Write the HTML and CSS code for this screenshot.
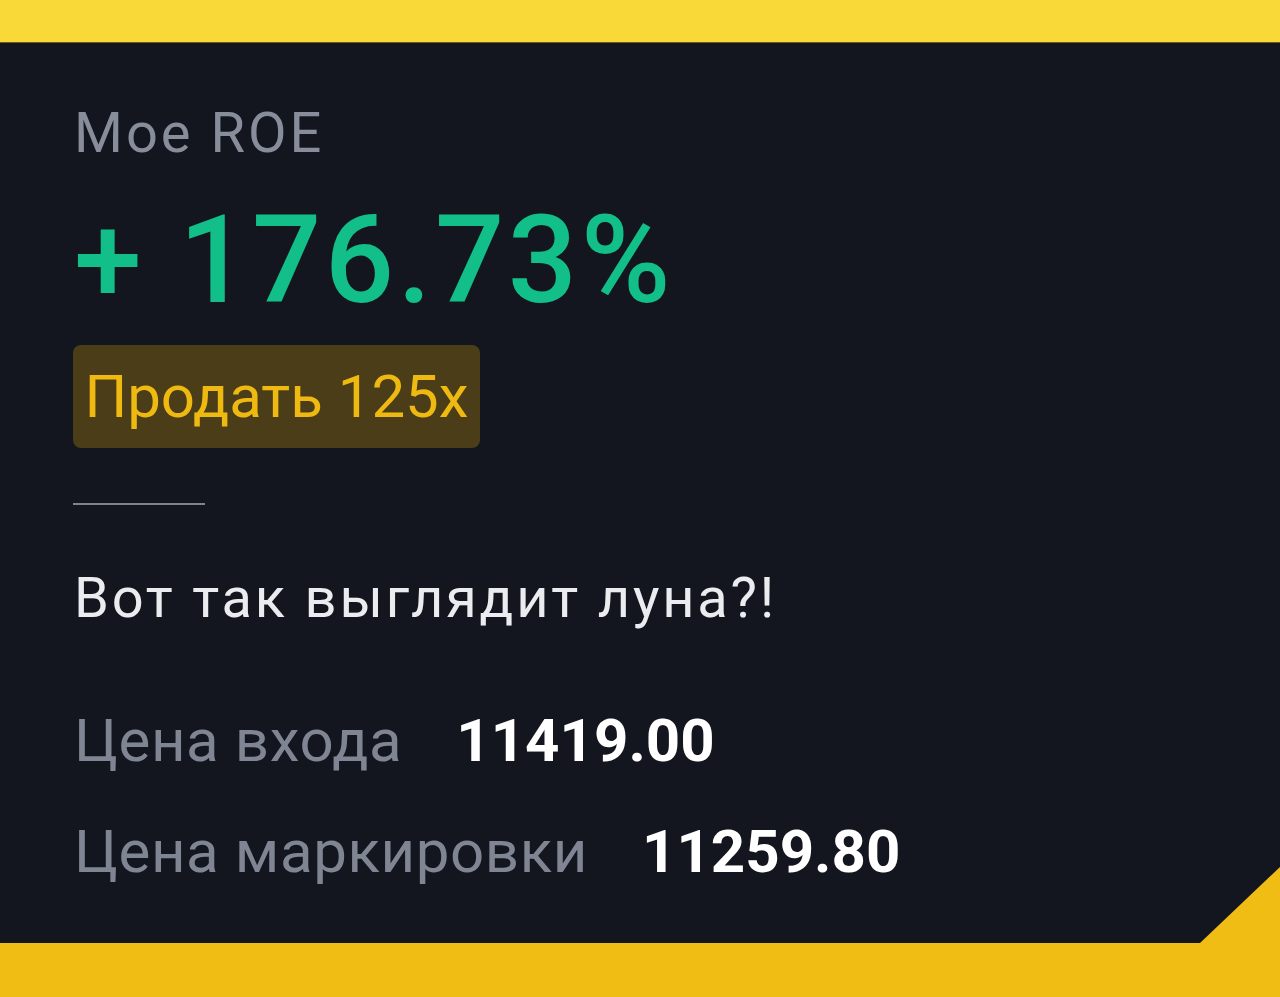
FILE: index.html
```html
<!DOCTYPE html>
<html lang="ru">
<head>
<meta charset="utf-8">
<title>ROE</title>
<link rel="stylesheet" href="styles.css">
</head>
<body>
<div class="frame">
  <div class="top-band"></div>
  <main class="panel">
    <div class="label">Мое ROE</div>
    <div class="roe">+ 176.73%</div>
    <div class="badge"><span>Продать 125x</span></div>
    <div class="divider"></div>
    <div class="caption">Вот так выглядит луна?!</div>
    <div class="row entry"><span class="key">Цена входа</span><span class="val">11419.00</span></div>
    <div class="row mark"><span class="key">Цена маркировки</span><span class="val">11259.80</span></div>
  </main>
  <div class="bottom-band"></div>
</div>
</body>
</html>
```
FILE: styles.css
```css
html, body {
  margin: 0;
  padding: 0;
}
body {
  width: 1280px;
  height: 997px;
  overflow: hidden;
  font-family: Roboto, "Liberation Sans", sans-serif;
  background: #f0bd14;
}
.frame {
  display: flex;
  flex-direction: column;
  height: 997px;
}
.top-band {
  height: 42px;
  background: #f9d937;
  border-bottom: 1px solid #6b5a1a;
}
.panel {
  height: 900px;
  background: #13161e;
  padding-left: 74px;
  box-sizing: border-box;
  display: flex;
  flex-direction: column;
  align-items: flex-start;
  clip-path: polygon(0 0, 100% 0, 100% calc(100% - 76px), calc(100% - 80px) 100%, 0 100%);
}
.bottom-band {
  flex: 1;
  background: #f0bd14;
}
.label {
  margin-top: 55px;
  font-size: 56px;
  line-height: 70px;
  letter-spacing: 3px;
  color: #878d9a;
}
.roe {
  margin-top: 33px;
  font-size: 122px;
  font-weight: 500;
  line-height: 120px;
  letter-spacing: 3.5px;
  color: #12bf88;
}
.badge {
  margin-top: 24px;
  margin-left: -1px;
  background: #4b3d18;
  border-radius: 8px;
  height: 103px;
  width: 407px;
  display: flex;
  align-items: center;
  justify-content: center;
}
.badge span {
  font-size: 60px;
  color: #eeb910;
}
.divider {
  margin-top: 55px;
  margin-left: -1px;
  width: 132px;
  height: 2px;
  background: #7d8390;
}
.caption {
  margin-top: 63px;
  font-size: 56px;
  line-height: 61px;
  letter-spacing: 2.8px;
  color: #eaecef;
}
.row {
  display: flex;
  align-items: baseline;
  font-size: 60px;
}
.entry { margin-top: 76px; }
.mark { margin-top: 40px; }
.key {
  color: #7f8592;
  letter-spacing: 0.6px;
}
.val {
  margin-left: 54px;
  font-weight: 700;
  color: #ffffff;
}
```
